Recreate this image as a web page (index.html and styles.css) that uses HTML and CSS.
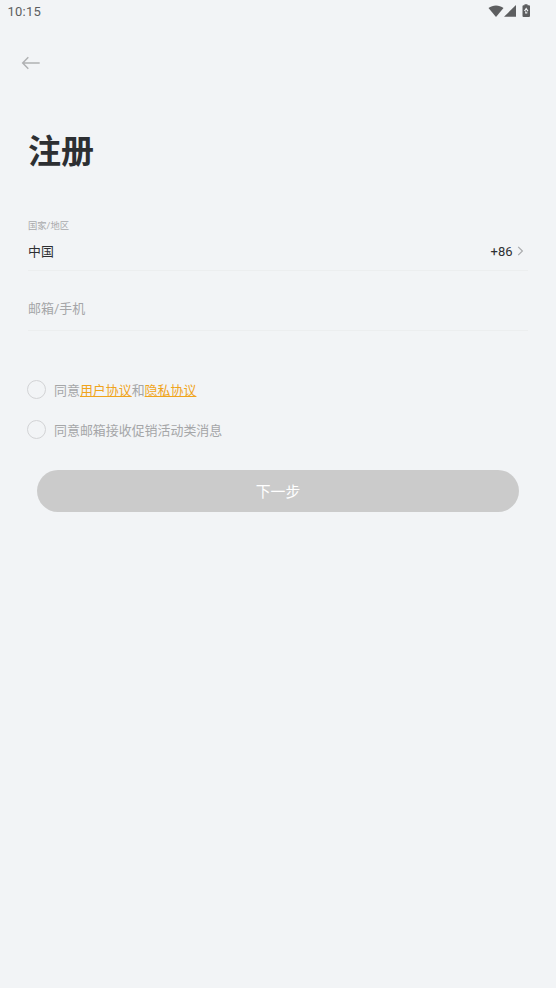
FILE: index.html
```html
<!DOCTYPE html>
<html lang="zh-CN">
<head>
<meta charset="utf-8">
<title>注册</title>
<link rel="stylesheet" href="styles.css">
</head>
<body>
<header class="status">
  <span class="time">10:15</span>
  <svg class="status-icons" width="44" height="16" viewBox="0 0 44 16" fill="#5d5e60">
    <path d="M.5 7.600C4.800 4.200 11.200 4.200 15.500 7.600L8 16.500Z" transform="translate(0 -.5)"/>
    <path d="M28 4V15.800H16Z"/>
    <path d="M36.500 4.200V3.300h3v.9h1.500q1 0 1 1V15q0 1-1 1h-5.500q-1 0-1-1V5.200q0-1 1-1Z"/>
    <path d="M38.200 6.400L35.900 10h1.200v2.600h2.200V10h1.200Z" fill="#f2f4f6"/>
    <path d="M37.600 9h1.200v2.200h-1.200Z"/>
  </svg>
</header>
<nav class="nav">
  <svg width="20" height="14" viewBox="0 0 20 14" fill="none" stroke="#b0b1b3" stroke-width="1.500"><path d="M7.300 1.300L1.700 7l5.600 5.700M1.700 7h17"/></svg>
</nav>
<main>
  <h1>注册</h1>
  <section class="region">
    <div class="label">国家/地区</div>
    <div class="row">
      <span>中国</span>
      <span class="code">+86<svg width="7" height="10" viewBox="0 0 7 10" fill="none" stroke="#aaabad" stroke-width="1.200"><path d="M1.200 .8L5.400 5 1.200 9.200"/></svg></span>
    </div>
  </section>
  <div class="account">邮箱/手机</div>
  <div class="agree"><i class="radio"></i><span>同意<a>用户协议</a>和<a>隐私协议</a></span></div>
  <div class="agree"><i class="radio"></i><span>同意邮箱接收促销活动类消息</span></div>
  <button class="next">下一步</button>
</main>
</body>
</html>
```
FILE: styles.css
```css
* { box-sizing: border-box; }
body {
  margin: 0;
  min-height: 988px;
  background: #f2f4f6;
  color: #2d2f32;
  font: 13px/20px Roboto, "Noto Sans CJK SC", sans-serif;
}
svg { display: block; }
.status {
  display: flex;
  justify-content: space-between;
  height: 24px;
  padding: 0 24px 0 7.500px;
}
.time {
  padding-top: 2px;
  color: #5d5e60;
  letter-spacing: .25px;
}
.status-icons { margin-top: 1px; }
.nav { height: 102px; padding: 32px 0 0 21px; }
main { padding: 0 28px; }
h1 {
  margin: 0;
  height: 92px;
  font-size: 33px;
  line-height: 52px;
  font-weight: 700;
}
.region { height: 53px; border-bottom: 1px solid #eceeef; }
.label {
  height: 24px;
  color: #a9aaac;
  font-size: 9.300px;
  line-height: 16px;
}
.row { display: flex; justify-content: space-between; }
.row > span:first-child { font-size: 12.900px; }
.code {
  display: flex;
  align-items: center;
  gap: 4.500px;
  padding-right: 4px;
}
.code svg { margin-bottom: 2px; }
.account {
  height: 60px;
  margin-bottom: 49px;
  padding-top: 28px;
  border-bottom: 1px solid #eceeef;
  color: #a5a6a8;
  font-size: 12.950px;
}
.agree {
  display: flex;
  align-items: flex-start;
  gap: 7px;
  height: 20px;
  margin-bottom: 20px;
  color: #a5a6a8;
  font-size: 12.950px;
}
.agree span { padding-top: 1px; }
.radio {
  width: 19px;
  height: 19px;
  margin-left: -1px;
  margin-right: 1px;
  border: 1px solid #d2d3d5;
  border-radius: 50%;
}
.agree a { color: #f0a41c; text-decoration: underline; }
.next {
  display: block;
  width: 482px;
  height: 42px;
  margin: 30px 0 0 9px;
  padding: 0;
  border: 0;
  border-radius: 21px;
  background: #cbcbcb;
  color: #fff;
  font: 14.800px/42px "Noto Sans CJK SC", sans-serif;
}
```
